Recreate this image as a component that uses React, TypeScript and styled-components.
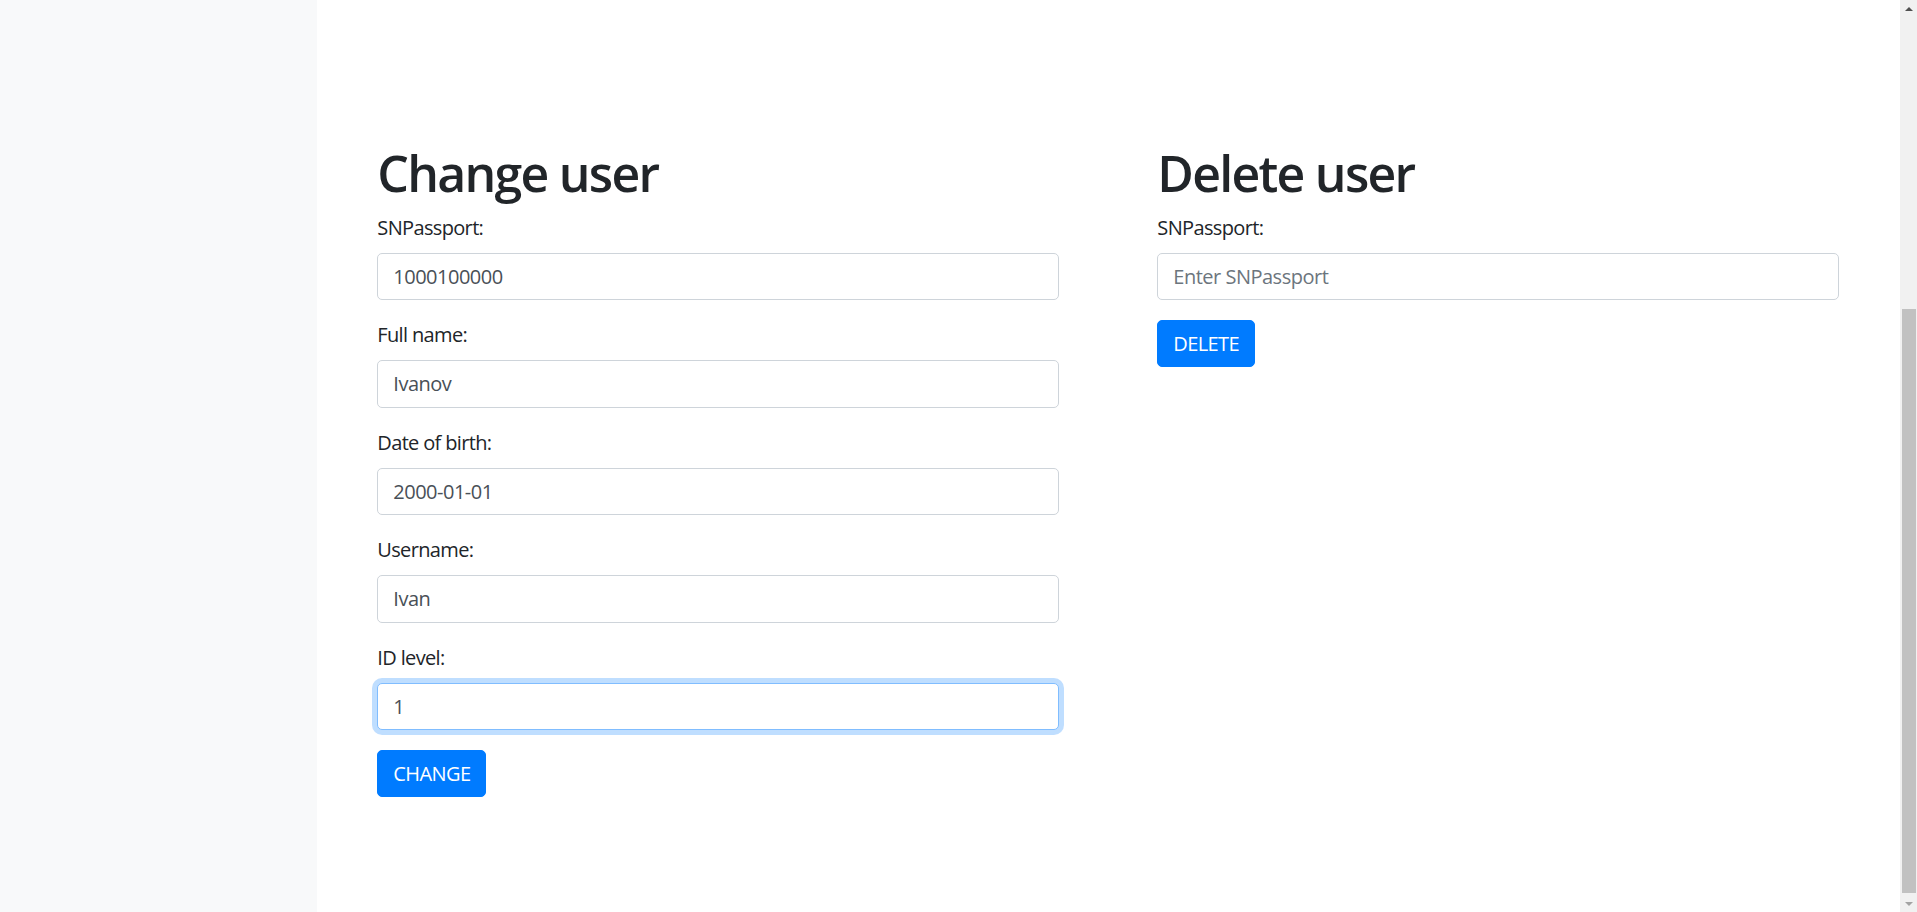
import React from "react";
import styled, { createGlobalStyle, css } from "styled-components";

const GlobalStyle = createGlobalStyle`
  html, body {
    margin: 0;
    padding: 0;
    overflow: hidden;
  }
  body {
    font-family: "Open Sans", "Noto Sans", "Liberation Sans", sans-serif;
    font-size: 20px;
    line-height: 1.5;
    color: #212529;
    background: #fff;
  }
  * { box-sizing: border-box; }
`;

const Page = styled.div`
  display: grid;
  grid-template-columns: 316.67px 1fr 17px;
  height: 100vh;
`;

const Sidebar = styled.nav`
  background: #f8f9fa;
`;

const Main = styled.main`
  padding: 142.6px 61.3px 0 60.67px;
  display: grid;
  grid-template-columns: 1fr 1fr;
  column-gap: 98.7px;
  align-items: start;
`;

const Section = styled.section`
  display: flex;
  flex-direction: column;
  align-items: flex-start;
`;

const Title = styled.h1`
  margin: 0 0 10px;
  font-size: 50px;
  font-weight: 600;
  line-height: 1.2;
  letter-spacing: -1.75px;
  color: #212529;
`;

const Group = styled.div`
  width: 100%;
  margin-bottom: 20px;
  display: flex;
  flex-direction: column;
  align-items: flex-start;
`;

const Label = styled.label`
  display: inline-block;
  margin-bottom: 10px;
  line-height: 30px;
  letter-spacing: -0.65px;
`;

const Input = styled.input<{ $focused?: boolean }>`
  display: block;
  width: 100%;
  height: 47.5px;
  padding: 7.5px 15px;
  font-family: inherit;
  font-size: 20px;
  line-height: 30px;
  letter-spacing: -0.5px;
  color: #495057;
  background: #fff;
  border: 1px solid #ced4da;
  border-radius: 5px;
  outline: none;
  &::placeholder {
    color: #6c757d;
    opacity: 1;
  }
  ${(p) =>
    p.$focused &&
    css`
      border-color: #80bdff;
      box-shadow: 0 0 0 5px rgba(0, 123, 255, 0.25);
    `}
`;

const Button = styled.button`
  display: inline-block;
  padding: 7.5px 15px;
  font-family: inherit;
  font-size: 20px;
  line-height: 30px;
  letter-spacing: -0.6px;
  color: #fff;
  background: #007bff;
  border: 1px solid #007bff;
  border-radius: 5px;
  cursor: pointer;
`;

/* Browser scrollbar (page is scrolled to its bottom) */
const ScrollTrack = styled.div`
  display: flex;
  flex-direction: column;
  background: #f1f1f1;
`;

const ScrollArrow = styled.div`
  flex: 0 0 17px;
  display: flex;
  align-items: center;
  justify-content: center;
  svg {
    display: block;
  }
`;

const ScrollSpace = styled.div`
  flex: 1 1 0;
`;

const ScrollThumb = styled.div`
  flex: 0 0 584px;
  margin: 0 1px 2px 2px;
  background: #c1c1c1;
`;

type Field = { label: string; value?: string; placeholder?: string; focused?: boolean };

const changeFields: Field[] = [
  { label: "SNPassport:", value: "1000100000" },
  { label: "Full name:", value: "Ivanov" },
  { label: "Date of birth:", value: "2000-01-01" },
  { label: "Username:", value: "Ivan" },
  { label: "ID level:", value: "1", focused: true },
];

const deleteFields: Field[] = [{ label: "SNPassport:", placeholder: "Enter SNPassport" }];

function FormSection({ title, fields, action }: { title: string; fields: Field[]; action: string }) {
  return (
    <Section>
      <Title>{title}</Title>
      {fields.map((f, i) => (
        <Group key={i}>
          <Label>{f.label}</Label>
          <Input
            type="text"
            defaultValue={f.value}
            placeholder={f.placeholder}
            $focused={f.focused}
          />
        </Group>
      ))}
      <Button type="button">{action}</Button>
    </Section>
  );
}

function Scrollbar() {
  return (
    <ScrollTrack>
      <ScrollArrow>
        <svg width="8" height="4" viewBox="0 0 8 4">
          <path d="M0 4 L4 0 L8 4 Z" fill="#505050" />
        </svg>
      </ScrollArrow>
      <ScrollSpace />
      <ScrollThumb />
      <ScrollArrow>
        <svg width="8" height="4" viewBox="0 0 8 4">
          <path d="M0 0 L8 0 L4 4 Z" fill="#a3a3a3" />
        </svg>
      </ScrollArrow>
    </ScrollTrack>
  );
}

export default function App() {
  return (
    <>
      <GlobalStyle />
      <Page>
        <Sidebar />
        <Main>
          <FormSection title="Change user" fields={changeFields} action="CHANGE" />
          <FormSection title="Delete user" fields={deleteFields} action="DELETE" />
        </Main>
        <Scrollbar />
      </Page>
    </>
  );
}
